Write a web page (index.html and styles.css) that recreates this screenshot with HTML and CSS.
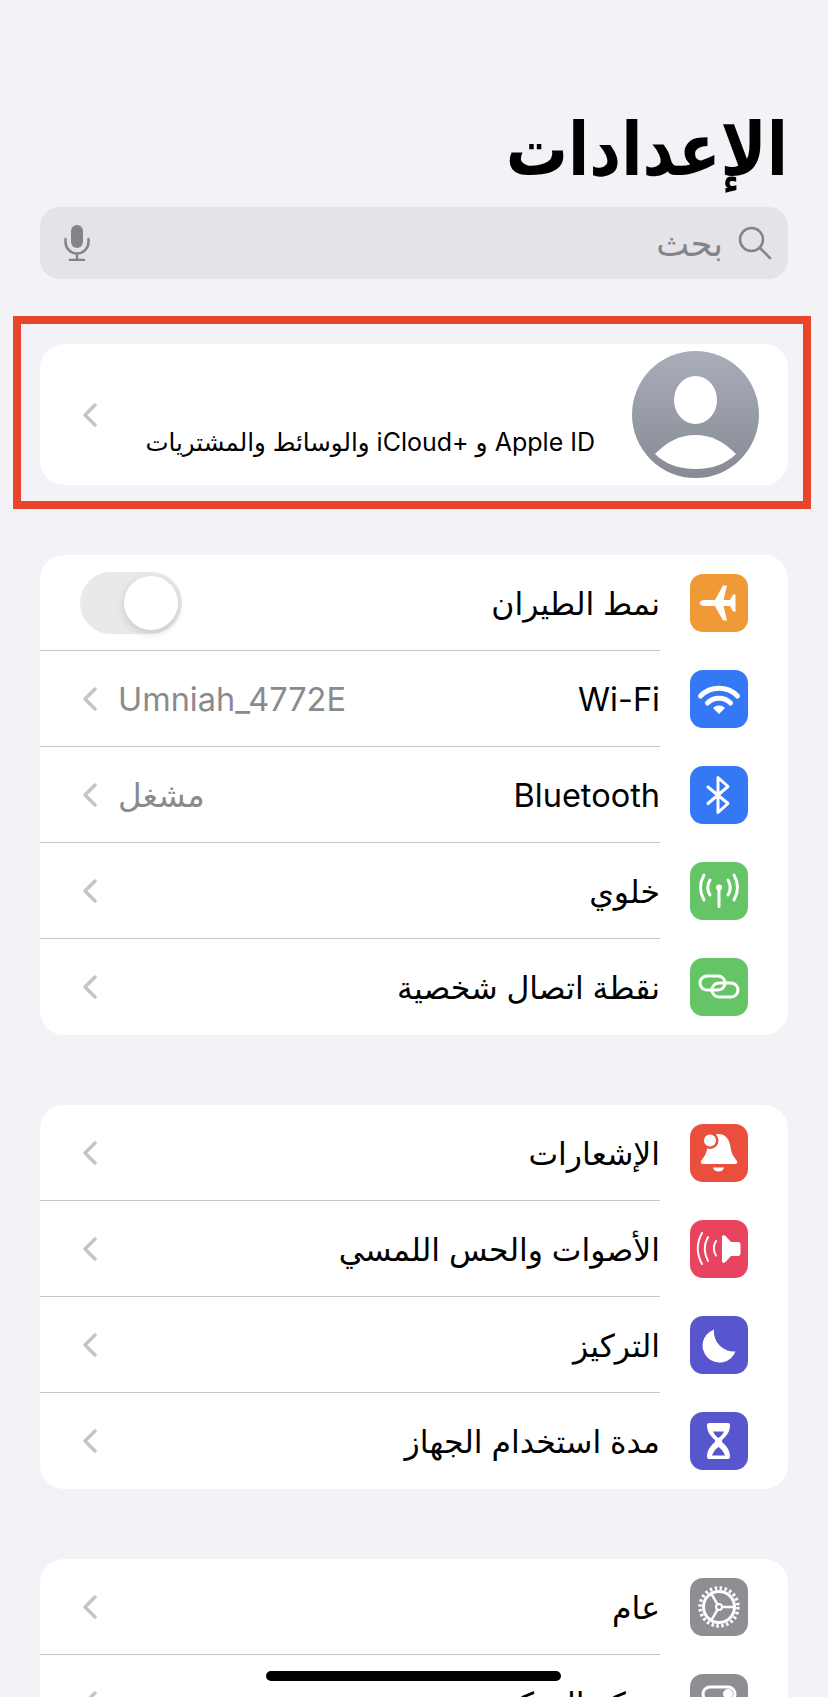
FILE: index.html
```html
<!DOCTYPE html>
<html lang="ar" dir="rtl">
<head>
    <meta charset="UTF-8">
    <meta name="viewport" content="width=device-width, initial-scale=1.0">
    <title>الإعدادات</title>
    <link rel="stylesheet" href="styles.css">
</head>
<body>
    <main class="screen">
        <h1 class="title">الإعدادات</h1>

        <div class="search">
            <svg class="search-icon" viewBox="0 0 34 34"><circle cx="13.5" cy="13.5" r="11.5"/><path d="M22 22 32 32"/></svg>
            <span class="search-text">بحث</span>
            <svg class="mic" viewBox="0 0 26 36"><rect x="7" y="0" width="12" height="23" rx="6"/><path class="mic-line" d="M1.5 14v3a11.5 11.5 0 0 0 23 0v-3M13 29v6M6 35h14"/></svg>
        </div>

        <div class="highlight">
            <div class="card profile">
                <svg class="avatar" viewBox="0 0 127 127">
                    <defs>
                        <linearGradient id="avatarFill" x1="0" y1="0" x2="0" y2="1">
                            <stop offset="0" stop-color="#a8adb9"/>
                            <stop offset="1" stop-color="#868b94"/>
                        </linearGradient>
                    </defs>
                    <circle cx="63.5" cy="63.5" r="63.5" fill="url(#avatarFill)"/>
                    <ellipse cx="63.5" cy="49" rx="21.5" ry="24" fill="#fff"/>
                    <path d="M23 103C36 90 48 84 63.5 84S91 90 104 103C94 113 80 118 63.5 118S33 113 23 103Z" fill="#fff"/>
                </svg>
                <span class="profile-text">Apple ID و iCloud+&lrm; <span class="profile-ar">والوسائط والمشتريات</span></span>
                <svg class="chevron chevron-end" viewBox="0 0 15 24"><path d="M13 2 3 12 13 22"/></svg>
            </div>
        </div>

        <section class="card group">
            <div class="row">
                <span class="icon orange"><svg viewBox="0 0 58 58"><path class="fill" d="M9.5 29C9.5 27.5 12 26 15 26H25L33 11.5H37L33.5 26H40L43 20.5H45.5V37.5H43L40 32H33.5L37 46.5H33L25 32H15C12 32 9.5 30.5 9.5 29Z"/></svg></span>
                <span class="label ar">نمط الطيران</span>
                <span class="switch"><span class="knob"></span></span>
            </div>
            <div class="row">
                <span class="icon blue"><svg viewBox="0 0 58 58"><path class="line thick" d="M10.5 26A26 26 0 0 1 47.5 26M17.5 33A16.5 16.5 0 0 1 40.5 33"/><path class="fill" d="M29 44 23 38A8.5 8.5 0 0 1 35 38Z"/></svg></span>
                <span class="label">Wi-Fi</span>
                <span class="value">Umniah_4772E</span>
                <svg class="chevron" viewBox="0 0 15 24"><path d="M13 2 3 12 13 22"/></svg>
            </div>
            <div class="row">
                <span class="icon blue"><svg viewBox="0 0 58 58"><path class="line" d="M18 21 38 37.5 28 46.5V11.5L38 20.5 18 37.5"/></svg></span>
                <span class="label">Bluetooth</span>
                <span class="value">مشغل</span>
                <svg class="chevron" viewBox="0 0 15 24"><path d="M13 2 3 12 13 22"/></svg>
            </div>
            <div class="row">
                <span class="icon green"><svg viewBox="0 0 58 58"><circle class="fill" cx="29" cy="25.5" r="3"/><path class="line" d="M29 26V44.5M20 18Q15.5 25.5 20 33M38 18Q42.5 25.5 38 33M14 13Q7 25.5 14 38M44 13Q51 25.5 44 38"/></svg></span>
                <span class="label ar">خلوي</span>
                <svg class="chevron chevron-end" viewBox="0 0 15 24"><path d="M13 2 3 12 13 22"/></svg>
            </div>
            <div class="row">
                <span class="icon green"><svg viewBox="0 0 58 58"><rect class="line" x="10" y="18" width="25" height="14" rx="7"/><rect class="line" x="22" y="25" width="26" height="14" rx="7"/></svg></span>
                <span class="label ar">نقطة اتصال شخصية</span>
                <svg class="chevron chevron-end" viewBox="0 0 15 24"><path d="M13 2 3 12 13 22"/></svg>
            </div>
        </section>

        <section class="card group">
            <div class="row">
                <span class="icon red"><svg viewBox="0 0 58 58"><path class="fill" d="M28.5 10C36 10 39.5 16 40.5 23 41.5 30 44 33 47 37 47.5 38.5 47 40 45 40H13C11 40 10.5 38.5 11 37 14 33 16.5 30 17.5 23 18.5 16 21 10 28.5 10Z"/><path class="fill" d="M23 43.5H34C33.5 46 31.5 47.5 28.5 47.5S23.5 46 23 43.5Z"/><circle cx="20" cy="16.5" r="8.5" fill="#ea4f3d"/><circle class="fill" cx="20" cy="16.5" r="6"/></svg></span>
                <span class="label ar">الإشعارات</span>
                <svg class="chevron chevron-end" viewBox="0 0 15 24"><path d="M13 2 3 12 13 22"/></svg>
            </div>
            <div class="row">
                <span class="icon pink"><svg viewBox="0 0 58 58"><path class="fill" d="M32 17C32 15 34 14.5 35.5 16L41 22H48C49.5 22 50.5 23 50.5 24.5V33.5C50.5 35 49.5 36 48 36H41L35.5 42C34 43.5 32 43 32 41Z"/><path class="line thin" d="M26 21Q21.5 28.5 26 35.5M18 17Q11.5 28.5 18 41M12 13Q3.5 28.5 12 44"/></svg></span>
                <span class="label ar">الأصوات والحس اللمسي</span>
                <svg class="chevron chevron-end" viewBox="0 0 15 24"><path d="M13 2 3 12 13 22"/></svg>
            </div>
            <div class="row">
                <span class="icon indigo"><svg viewBox="0 0 58 58"><path class="fill" d="M24 13.5A17 17 0 1 0 45.5 35.5 20 20 0 0 1 24 13.5Z"/></svg></span>
                <span class="label ar">التركيز</span>
                <svg class="chevron chevron-end" viewBox="0 0 15 24"><path d="M13 2 3 12 13 22"/></svg>
            </div>
            <div class="row">
                <span class="icon indigo"><svg viewBox="0 0 58 58"><path class="fill" fill-rule="evenodd" d="M19 11H38C39.5 11 40 12 40 13.5 40 20 36 24.5 33 27 31.5 28.2 31.5 29.8 33 31 36 33.5 40 38 40 44.5 40 46 39.5 47 38 47H19C17.5 47 17 46 17 44.5 17 38 21 33.5 24 31 25.5 29.8 25.5 28.2 24 27 21 24.5 17 20 17 13.5 17 12 17.5 11 19 11ZM23 19.5H34C33 22 30.5 24.5 28.5 26 26.5 24.5 24 22 23 19.5ZM28.5 35C31 36.5 34 40 35 43.5H22C23 40 26 36.5 28.5 35Z"/></svg></span>
                <span class="label ar">مدة استخدام الجهاز</span>
                <svg class="chevron chevron-end" viewBox="0 0 15 24"><path d="M13 2 3 12 13 22"/></svg>
            </div>
        </section>

        <section class="card group">
            <div class="row">
                <span class="icon gray"><svg viewBox="0 0 58 58"><circle class="line" cx="29" cy="29" r="15.5"/><circle class="dash" cx="29" cy="29" r="19"/><circle class="line thin" cx="29" cy="29" r="3"/><path class="line spoke" d="M32 29H44.5M27.5 26.4 21.25 15.6M27.5 31.6 21.25 42.4"/></svg></span>
                <span class="label ar">عام</span>
                <svg class="chevron chevron-end" viewBox="0 0 15 24"><path d="M13 2 3 12 13 22"/></svg>
            </div>
            <div class="row">
                <span class="icon gray"><svg viewBox="0 0 58 58"><rect class="line" x="13" y="13" width="32" height="14" rx="7"/><circle class="fill" cx="38" cy="20" r="5"/></svg></span>
                <span class="label ar">مركز التحكم</span>
                <svg class="chevron chevron-end" viewBox="0 0 15 24"><path d="M13 2 3 12 13 22"/></svg>
            </div>
        </section>
    </main>

    <div class="home-bar"></div>
</body>
</html>
```

FILE: styles.css
```css
/* General Styles */
html, body {
    margin: 0;
    height: 100%;
    overflow: hidden;
}

body {
    background-color: #f2f2f7;
    color: #000;
    font-family: Inter, "DejaVu Sans", sans-serif;
}

.screen {
    padding: 102px 40px 0;
}

.title {
    margin: 0;
    height: 105px;
    font-size: 62px;
    line-height: 80px;
    font-weight: 700;
    transform: scaleY(1.18);
    transform-origin: top;
}

/* Search */
.search {
    display: flex;
    align-items: center;
    height: 72px;
    padding: 0 16px 0 24px;
    background-color: #e3e3e8;
    border-radius: 20px;
}

.search-icon {
    width: 34px;
    height: 34px;
    fill: none;
    stroke: #83838a;
    stroke-width: 2.5;
    stroke-linecap: round;
}

.search-text {
    margin-right: 15px;
    font-size: 35px;
    color: #83838a;
}

.mic {
    width: 26px;
    height: 36px;
    margin-right: auto;
    fill: #83838a;
}

.mic-line {
    fill: none;
    stroke: #83838a;
    stroke-width: 2.5;
    stroke-linecap: round;
}

/* Red frame round the profile card */
.highlight {
    margin: 37px -23px 0 -27px;
    padding: 20px 15px 16px 19px;
    border: 8px solid #e8452a;
}

.card {
    background-color: #fff;
    border-radius: 24px;
}

.profile {
    display: flex;
    align-items: center;
    height: 141px;
    padding: 0 29px 0 42px;
    box-sizing: border-box;
}

.avatar {
    flex: none;
    width: 127px;
    height: 127px;
}

.profile-text {
    margin: 54px 37px 0 0;
    font-size: 25px;
    white-space: nowrap;
}

.profile-ar {
    font-size: 24.5px;
}

.chevron {
    flex: none;
    width: 15px;
    height: 24px;
    fill: none;
    stroke: #c5c5c7;
    stroke-width: 3.5;
    stroke-linecap: round;
    stroke-linejoin: round;
}

.chevron-end {
    margin-right: auto;
}

/* Settings groups */
.group {
    margin-top: 46px;
    overflow: hidden;
}

.group + .group {
    margin-top: 70px;
}

.row {
    position: relative;
    display: flex;
    align-items: center;
    height: 96px;
    padding: 0 40px 0 42px;
    box-sizing: border-box;
}

.row + .row::before {
    content: "";
    position: absolute;
    top: -1px;
    left: 0;
    right: 128px;
    height: 1px;
    background-color: #c6c6c8;
}

.icon {
    flex: none;
    width: 58px;
    height: 58px;
    margin-left: 30px;
    border-radius: 13px;
}

.icon svg {
    display: block;
    width: 58px;
    height: 58px;
}

.orange { background-color: #f09a37; }
.blue { background-color: #3478f6; }
.green { background-color: #65c466; }
.red { background-color: #ea4f3d; }
.pink { background-color: #e9445f; }
.indigo { background-color: #5856ce; }
.gray { background-color: #8e8e93; }

.fill {
    fill: #fff;
}

.line {
    fill: none;
    stroke: #fff;
    stroke-width: 3;
    stroke-linecap: round;
    stroke-linejoin: round;
}

.thick {
    stroke-width: 5;
}

.thin {
    stroke-width: 2;
}

.spoke {
    stroke-width: 2.5;
}

.dash {
    fill: none;
    stroke: #fff;
    stroke-width: 3.5;
    stroke-dasharray: 2.5 2.474;
}

.label {
    font-size: 32.5px;
    white-space: nowrap;
}

.ar {
    font-size: 31.5px;
}

.value {
    margin-right: auto;
    margin-left: 21px;
    font-size: 32.5px;
    color: #8a8a8e;
    white-space: nowrap;
}

.switch {
    display: flex;
    align-items: center;
    width: 102px;
    height: 62px;
    margin-right: auto;
    margin-left: -2px;
    padding: 0 4px;
    box-sizing: border-box;
    background-color: #e9e9ea;
    border-radius: 31px;
}

.knob {
    width: 54px;
    height: 54px;
    background-color: #fff;
    border-radius: 50%;
    box-shadow: 0 3px 8px rgba(0, 0, 0, 0.15);
}

/* Home indicator */
.home-bar {
    position: fixed;
    top: 1671px;
    left: 266px;
    width: 295px;
    height: 10px;
    background-color: #000;
    border-radius: 5px;
}
```
